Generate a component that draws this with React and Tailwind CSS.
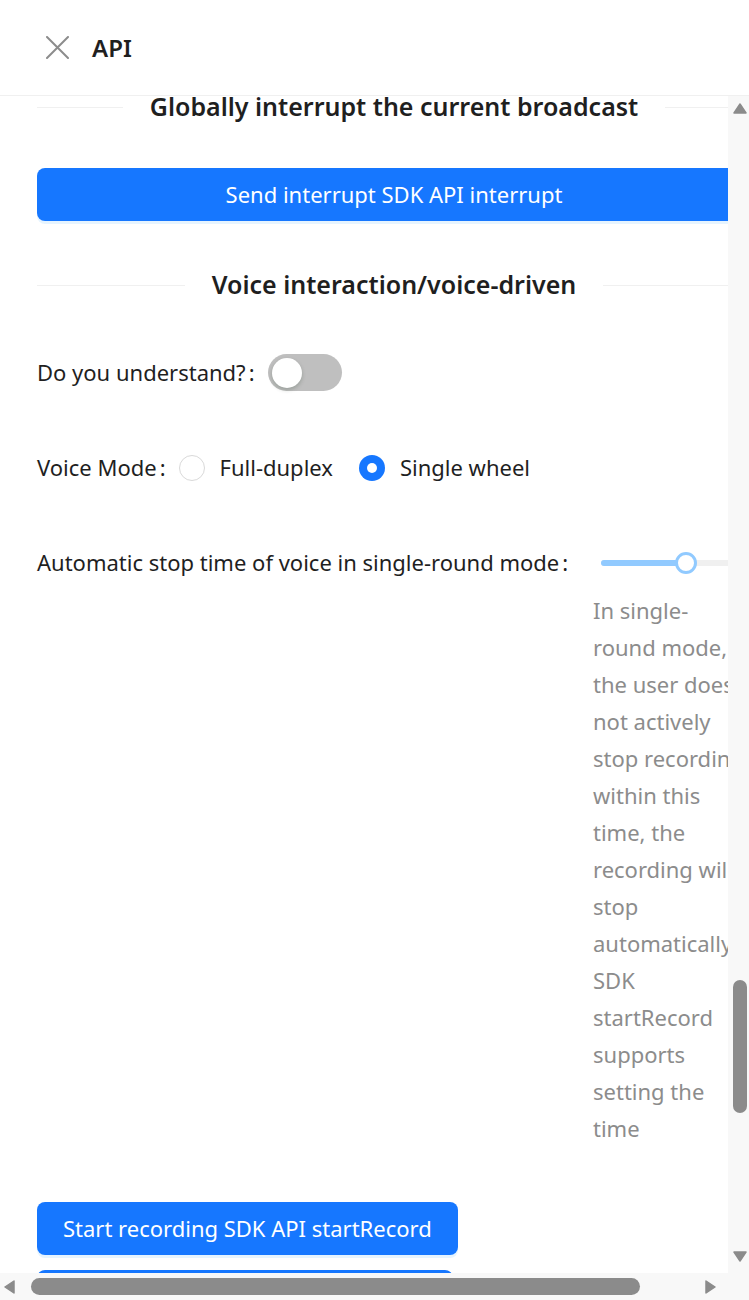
const Divider = ({ title, className }) => (
  <div className={`flex items-center ${className}`}>
    <div className="flex-1 border-t border-[#f0f0f0]" />
    <span className="px-[27px] text-[25px] font-semibold text-[#1f1f1f] whitespace-nowrap">
      {title}
    </span>
    <div className="flex-1 border-t border-[#f0f0f0]" />
  </div>
);

const Label = ({ children }) => (
  <span className="flex shrink-0 whitespace-nowrap">
    {children}
    <span className="ml-[3px] mr-[13px]">:</span>
  </span>
);

const Arrow = ({ dir }) => {
  const points = {
    up: '1,11 7,2 13,11',
    down: '1,2 13,2 7,11',
    left: '11,1 11,13 2,7',
    right: '2,1 2,13 11,7',
  };
  return (
    <svg width="14" height="14" viewBox="0 0 14 14" className="text-[#8b8b8b]">
      <polygon points={points[dir]} fill="currentColor" strokeLinejoin="round" stroke="currentColor" strokeWidth="1.5" />
    </svg>
  );
};

const Radio = ({ checked, label }) => (
  <label className="flex items-center gap-[15px]">
    {checked ? (
      <span className="flex h-[26px] w-[26px] items-center justify-center rounded-full bg-[#1677ff]">
        <span className="h-[10px] w-[10px] rounded-full bg-white" />
      </span>
    ) : (
      <span className="h-[26px] w-[26px] rounded-full border border-[#d9d9d9] bg-white" />
    )}
    <span>{label}</span>
  </label>
);

const description =
  'In single-round mode, the user does not actively stop recording within this time, the recording will stop automatically. SDK startRecord supports setting the time';

export default function App() {
  return (
    <div className="flex h-[1300px] w-[749px] flex-col overflow-hidden bg-white font-['Noto_Sans',sans-serif] text-[22px] text-[#1f1f1f]">
      <header className="flex h-[96px] shrink-0 items-center gap-[23px] border-b border-[#f0f0f0] pl-[46px]">
        <svg width="23" height="23" viewBox="0 0 23 23" className="text-[#8c8c8c]">
          <path d="M1 1 L22 22 M22 1 L1 22" stroke="currentColor" strokeWidth="2" strokeLinecap="round" />
        </svg>
        <h1 className="text-[24px] font-semibold leading-none">API</h1>
      </header>

      <div className="flex min-h-0 flex-1">
        <div className="min-w-0 flex-1 overflow-hidden">
          <div className="w-[751px] pl-[37px]">
            <Divider title="Globally interrupt the current broadcast" className="h-[22px]" />

            <button className="mt-[50px] flex h-[53px] w-full items-center justify-center rounded-[8px] bg-[#1677ff] text-white shadow-[0_3px_0_rgba(5,145,255,0.1)]">
              Send interrupt SDK API interrupt
            </button>

            <Divider title="Voice interaction/voice-driven" className="mt-[47px] h-[34px]" />

            <div className="mt-[52px] flex h-[37px] items-center">
              <Label>Do you understand?</Label>
              <span className="flex h-[37px] w-[74px] items-center rounded-full bg-[#bfbfbf] px-[4px]">
                <span className="h-[30px] w-[30px] rounded-full bg-white shadow-[0_2px_4px_rgba(0,35,11,0.2)]" />
              </span>
            </div>

            <div className="mt-[58px] flex h-[37px] items-center">
              <Label>Voice Mode</Label>
              <div className="flex items-center gap-[26px]">
                <Radio label="Full-duplex" />
                <Radio checked label="Single wheel" />
              </div>
            </div>

            <div className="mt-[58px] flex">
              <span className="h-[37px] w-[556px] shrink-0 leading-[37px]">
                <Label>Automatic stop time of voice in single-round mode</Label>
              </span>
              <div className="flex-1">
                <div className="flex h-[37px] items-center pl-[8px] pr-[10px]">
                  <div className="flex h-[6px] flex-1 items-center rounded-full bg-[#f0f0f0]">
                    <div className="h-[6px] w-[85px] rounded-l-full bg-[#91caff]" />
                    <div className="-ml-[11px] h-[22px] w-[22px] shrink-0 rounded-full border-[3px] border-[#91caff] bg-white" />
                  </div>
                </div>
                <p className="mt-[11px] w-[157px] text-[22px] leading-[37px] text-[#8c8c8c]">
                  {description}
                </p>
              </div>
            </div>

            <button className="mt-[55px] flex h-[53px] items-center rounded-[8px] bg-[#1677ff] px-[26px] text-white shadow-[0_3px_0_rgba(5,145,255,0.1)]">
              Start recording SDK API startRecord
            </button>
            <button className="mt-[15px] flex h-[53px] items-center rounded-[8px] bg-[#1677ff] px-[26px] text-white">
              Stop recording SDK API stopRecord
            </button>
          </div>
        </div>

        <div className="flex w-[21px] shrink-0 flex-col items-center bg-[#f8f8f8] pl-[3px]">
          <div className="mt-[6px]">
            <Arrow dir="up" />
          </div>
          <div className="mt-[864px] h-[133px] w-[14px] rounded-full bg-[#8b8b8b]" />
          <div className="mt-auto mb-[9px]">
            <Arrow dir="down" />
          </div>
        </div>
      </div>

      <div className="flex h-[27px] shrink-0 items-center bg-[#f8f8f8] pl-[3px]">
        <Arrow dir="left" />
        <div className="ml-[14px] h-[17px] w-[609px] rounded-full bg-[#8b8b8b]" />
        <div className="ml-[64px]">
          <Arrow dir="right" />
        </div>
      </div>
    </div>
  );
}
